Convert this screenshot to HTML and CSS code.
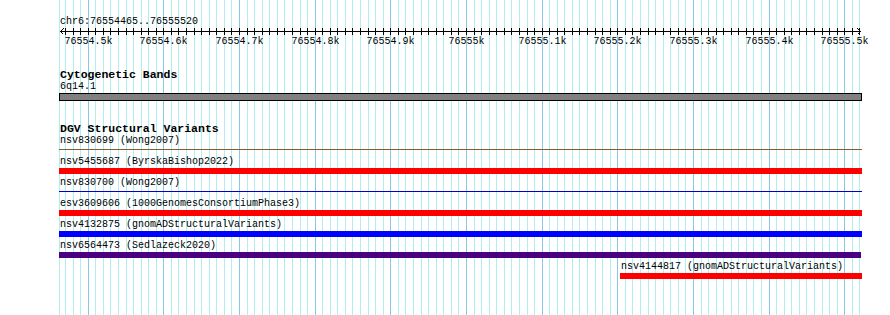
FILE: index.html
```html
<!DOCTYPE html>
<html lang="en">
<head>
    <meta charset="UTF-8">
    <title>chr6:76554465..76555520</title>
    <link rel="stylesheet" href="styles.css">
</head>
<body>
    <div class="browser">
        <svg class="grid" id="grid" width="890" height="315"></svg>
        <svg class="ruler" id="ruler" width="890" height="47">
            <text class="location" x="60" y="24">chr6:76554465..76555520</text>
        </svg>

        <section class="track">
            <h2 class="track-title">Cytogenetic Bands</h2>
            <div class="feature">
                <div class="feature-label">6q14.1</div>
                <div class="band"></div>
            </div>
        </section>

        <section class="track">
            <h2 class="track-title">DGV Structural Variants</h2>
            <div class="feature">
                <div class="feature-label">nsv830699 (Wong2007)</div>
                <div class="bar thin brown"></div>
            </div>
            <div class="feature">
                <div class="feature-label">nsv5455687 (ByrskaBishop2022)</div>
                <div class="bar red"></div>
            </div>
            <div class="feature">
                <div class="feature-label">nsv830700 (Wong2007)</div>
                <div class="bar thin blue"></div>
            </div>
            <div class="feature">
                <div class="feature-label">esv3609606 (1000GenomesConsortiumPhase3)</div>
                <div class="bar red"></div>
            </div>
            <div class="feature">
                <div class="feature-label">nsv4132875 (gnomADStructuralVariants)</div>
                <div class="bar blue"></div>
            </div>
            <div class="feature">
                <div class="feature-label">nsv6564473 (Sedlazeck2020)</div>
                <div class="bar purple" style="margin-right: 1px"></div>
            </div>
            <div class="feature" style="margin-left: 561px">
                <div class="feature-label">nsv4144817 (gnomADStructuralVariants)</div>
                <div class="bar red"></div>
            </div>
        </section>
    </div>

    <script>
        const start = 76554465;
        const end = 76555520;
        const x0 = 61.2;
        const scale = 0.7566;
        const ns = 'http://www.w3.org/2000/svg';

        function px(bp) {
            return Math.round(x0 + (bp - start) * scale) + 0.5;
        }

        function add(parent, tag, attrs, text) {
            const el = document.createElementNS(ns, tag);
            for (const k in attrs) el.setAttribute(k, attrs[k]);
            if (text) el.textContent = text;
            parent.appendChild(el);
            return el;
        }

        const grid = document.getElementById('grid');
        const ruler = document.getElementById('ruler');

        // left edge of the view block
        add(grid, 'line', { x1: 59.5, y1: 0, x2: 59.5, y2: 315, class: 'minor' });

        add(ruler, 'line', { x1: 60, y1: 31.5, x2: 861, y2: 31.5, class: 'axis' });
        add(ruler, 'polyline', { points: '63.5,28.5 60.5,31.5 63.5,34.5', class: 'axis' });
        add(ruler, 'polyline', { points: '857.5,28.5 860.5,31.5 857.5,34.5', class: 'axis' });

        for (let bp = 76554470; bp <= end; bp += 10) {
            const x = px(bp);
            const major = bp % 100 === 0;
            add(grid, 'line', { x1: x, y1: 0, x2: x, y2: 315, class: major ? 'major' : 'minor' });
            add(ruler, 'line', { x1: x, y1: 28, x2: x, y2: 35, class: 'axis' });
            if (major) {
                const label = bp % 1000 === 0 ? (bp / 1000) + 'k' : (bp / 1000).toFixed(1) + 'k';
                add(ruler, 'text', { x: x, y: 44, class: 'tick-label' }, label);
            }
        }
    </script>
</body>
</html>
```

FILE: styles.css
```css
body {
    margin: 0;
    background-color: #fff;
    font-family: "Liberation Mono", monospace;
    color: #000;
}
.browser {
    position: relative;
    width: 890px;
    height: 315px;
    overflow: hidden;
}
.grid {
    position: absolute;
    top: 0;
    left: 0;
    shape-rendering: crispEdges;
}
.grid .minor {
    stroke: #b0eef2;
    stroke-width: 1;
}
.grid .major {
    stroke: #88c8ea;
    stroke-width: 1;
}
.ruler {
    display: block;
    position: relative;
    shape-rendering: crispEdges;
}
.ruler .axis {
    stroke: #000;
    stroke-width: 1;
    fill: none;
}
.ruler text {
    font-family: "Liberation Mono", monospace;
    font-size: 10px;
    fill: #000;
}
.ruler .tick-label {
    text-anchor: middle;
}
.track {
    position: relative;
    margin-top: 21px;
    padding-left: 59px;
    width: 803px;
}
.track-title {
    margin: 0;
    padding-left: 1px;
    font: bold 11.5px/13px "Liberation Mono", monospace;
}
.feature-label {
    padding-left: 1px;
    font-size: 10px;
    line-height: 12px;
    white-space: nowrap;
}
.band {
    height: 6px;
    border: 1px solid #000;
    background: #808080;
}
.bar {
    height: 6px;
    margin-bottom: 3px;
}
.bar.thin {
    height: 1px;
    margin-top: 2px;
    margin-bottom: 6px;
}
.red {
    background: #ff0000;
}
.blue {
    background: #0000ff;
}
.bar.thin.blue {
    background: #0000cd;
}
.brown {
    background: #8b5a2b;
}
.purple {
    background: #4b0082;
}
```
